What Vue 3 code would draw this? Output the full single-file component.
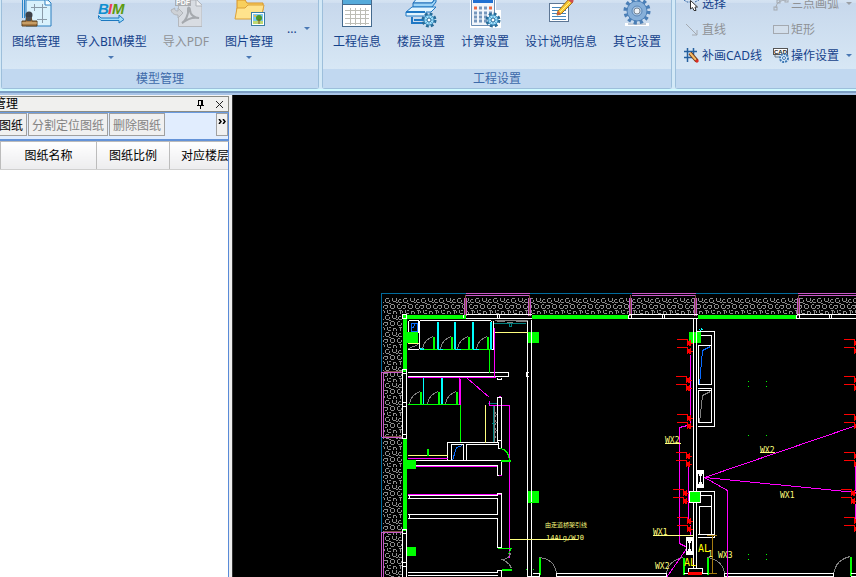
<template>
  <div class="app">
    <header class="ribbon">
      <section class="group group-model">
        <div class="group-body">
          <button v-for="item in modelTools" :key="item.label" class="tool" :disabled="item.disabled">
            <svg class="tool-icon" viewBox="0 0 32 28">
              <g v-if="item.icon === 'drawing'">
                <path d="M6 0V26H31V3L28 0Z" fill="#d9f1fc" stroke="#2a7fc0" />
                <path d="M2.500 0V18M4.500 0V18" stroke="#2a86c8" />
                <path d="M25 0V5H31" fill="#fff" stroke="#2a7fc0" />
                <path d="M11 7.500H27M14.500 4V11M22.500 4V23M17 19.500H27" stroke="#8a9aa8" fill="none" />
                <path d="M7 17H11L12 21H17V26H2V21H6Z" fill="#a97b45" stroke="#5d4220" />
                <path d="M2 23H17" stroke="#e5c084" />
                <circle cx="9" cy="15" r="3.500" fill="#3d4147" />
                <path d="M7 17H11V21H7Z" fill="#4b4d50" />
              </g>
              <g v-else-if="item.icon === 'bim'">
                <g class="bim-text">
                  <text x="3" y="14" fill="#0f8fd0">B</text>
                  <text x="13" y="14" fill="#ee3e58">I</text>
                  <text x="17" y="14" fill="#5d9b10">M</text>
                </g>
                <path d="M3.500 15.500L6 18H24V15L29 19.500L24 23V20.500H6L3.500 18Z" fill="#9fdcf8" stroke="#1b78bf" />
              </g>
              <g v-else-if="item.icon === 'pdf'">
                <path d="M8.500 0H27L32 5V26.500H8.500Z" fill="#d8dce2" stroke="#b4b8be" />
                <path d="M26 0V6H32" fill="#eceef1" stroke="#aeb2b8" />
                <rect x="5" y="0" width="16" height="6" fill="#a9adb2" />
                <text class="pdf-text" x="6" y="5">PDF</text>
                <path d="M12 23C15 22 19 14 18 9C18 7 20 7 20 10C20 15 25 18 29 18C24 17 17 19 12 23Z" fill="none" stroke="#a5a9ae" stroke-width="2" />
                <path d="M1 10C2 14 5 15 8 15V18L13 13L8 8V11C6 11 4 10 5 8Z" fill="#cdd1d6" stroke="#b0b4b9" />
              </g>
              <g v-else-if="item.icon === 'picture'">
                <path d="M4 18V0H12L14 3H30V10L23 18Z" fill="#f8cf5d" stroke="#d8942b" />
                <path d="M2 19L4 8H12L15 5H31L28 19Z" fill="#ffe38d" stroke="#dca13a" />
                <rect x="18.500" y="12.500" width="13" height="13" fill="#fff" stroke="#3b7da5" />
                <rect x="20" y="14" width="10" height="7" fill="#7cc7ef" />
                <rect x="20" y="21" width="10" height="3" fill="#bed972" />
                <circle cx="26" cy="18" r="3" fill="#4e9828" />
                <path d="M26 19V24" stroke="#855624" />
                <circle cx="22" cy="16" r="1" fill="#ffb426" />
              </g>
            </svg>
            <span class="tool-label">{{ item.label }}</span>
            <i v-if="item.menu" class="arrow"></i>
          </button>
          <button class="more" aria-label="更多"><span>...</span><i class="arrow"></i></button>
        </div>
        <div class="group-title">模型管理</div>
      </section>

      <section class="group group-project">
        <div class="group-body">
          <button v-for="item in projectTools" :key="item.label" class="tool">
            <svg class="tool-icon" viewBox="0 0 32 28">
              <g v-if="item.icon === 'table'" shape-rendering="crispEdges">
                <path d="M1 0H31V27H1Z" fill="#446a8e" />
                <rect x="2" y="5" width="28" height="21" fill="#fff" />
                <rect x="2" y="0" width="28" height="4" fill="#55aada" />
                <path d="M4 10H28M4 14H28M4 18H28M4 23H28M9 7V24M14 7V24M19 7V24M24 7V24" transform="translate(0 .5)" stroke="#bdbdb5" />
              </g>
              <g v-else-if="item.icon === 'floors'">
                <path d="M8 3L13 -3H31L27 3Z" fill="#d6effd" stroke="#1f6fb8" />
                <path d="M8 3H27L31 -2V2L27 7H8Z" fill="#9ad3f6" stroke="#1f6fb8" />
                <path d="M1 12L7 7H31L26 12H21V16H1Z" fill="#e1f4fe" stroke="#1f78c4" />
                <path d="M1 12H20M7 17V23H24V18M9 20H21" fill="none" stroke="#1f78c4" stroke-width="2" />
              </g>
              <g v-else-if="item.icon === 'calc'">
                <path d="M1 0H27V10H32V28H1Z" fill="#fff" />
                <path d="M2.500 0V25.500H25.500V0" fill="#f1f5fb" stroke="#6a8db5" />
                <rect x="4" y="0" width="20" height="3" fill="#1e6fd2" />
                <path d="M5 8H8M20 8H23" stroke="#ee6a43" stroke-width="3" />
                <path d="M10 8H18M5 13H23M5 17H23M5 21H18" stroke="#7797bd" stroke-width="3" stroke-dasharray="3 2" />
              </g>
              <g v-else-if="item.icon === 'note'">
                <rect x="4.500" y="3.500" width="19" height="18" fill="#fff" stroke="#5d7694" />
                <path d="M7 7.500H21M7 10.500H21M7 13.500H21M7 16.500H21M7 19.500H21" stroke="#4586bc" />
                <path d="M13 11L24 -1L28 2L16 14L12 15Z" fill="#f9c730" stroke="#9f7020" />
                <path d="M15 12L26 1" stroke="#fff08a" />
                <path d="M12 15L13 11L16 14Z" fill="#d95b3c" />
                <path d="M24 -1L28 2" stroke="#cf4d4d" stroke-width="3" />
              </g>
              <g v-else>
                <rect x="4" y="23" width="24" height="3" fill="#fff" />
                <path d="M7 24H25" stroke="#8498b0" />
                <circle cx="16" cy="11" r="11" fill="none" stroke="#4a7eb6" stroke-width="5" stroke-dasharray="3 2.760" />
                <circle cx="16" cy="11" r="10" fill="#86afd9" stroke="#4b7fb7" />
                <circle cx="16" cy="11" r="5" fill="#a9c8e8" stroke="#5b86b5" />
                <circle cx="16" cy="11" r="3" fill="#eef3f8" stroke="#7a8794" />
              </g>
              <g v-if="item.gear">
                <circle cx="24" cy="20" r="6" fill="none" stroke="#276b98" stroke-width="3" stroke-dasharray="2.700 2" />
                <circle cx="24" cy="20" r="5" fill="#a6e0fb" stroke="#2f83b4" />
                <path d="M24 16V24M20 20H28M21 17L27 23M27 17L21 23" stroke="#5bb0dc" />
                <circle cx="24" cy="20" r="2" fill="#fff" stroke="#276b98" />
              </g>
            </svg>
            <span class="tool-label">{{ item.label }}</span>
          </button>
        </div>
        <div class="group-title">工程设置</div>
      </section>

      <section class="group group-edit">
        <div class="group-body edit-grid">
          <button v-for="item in editTools" :key="item.label" class="small-tool" :disabled="item.disabled">
            <svg class="small-icon" viewBox="0 0 16 16">
              <g v-if="item.icon === 'select'">
                <path d="M0 5L3 7H6M11 7L15 5" fill="none" stroke="#2d62a3" stroke-dasharray="2 1" />
                <path d="M6.500 5.500V14L8.500 12.500L10 15.500H12L11 12H13.500Z" fill="#fff" stroke="#333" />
              </g>
              <g v-else-if="item.icon === 'arc'" fill="none" stroke="#a4a9b0">
                <path d="M3 13C3 8 7 5 14 5" />
                <rect x="1" y="12" width="3" height="3" />
                <rect x="4" y="5" width="3" height="3" />
                <rect x="12" y="4" width="3" height="3" />
              </g>
              <path v-else-if="item.icon === 'line'" d="M2 3L13 14M13 9V14H8" fill="none" stroke="#a4a9b0" />
              <rect v-else-if="item.icon === 'rect'" x=".5" y="4.500" width="15" height="8" fill="#d3dfec" stroke="#a4a9b0" />
              <g v-else-if="item.icon === 'cad'">
                <path d="M0 4.500H13M0 10.500H8M3.500 1V15M9.500 1V8" stroke="#245f9e" stroke-width="1.500" />
                <path d="M6 6L13 14" stroke="#6d3511" stroke-width="4" />
                <path d="M6 6L12 13" stroke="#f6bd67" stroke-width="2" />
                <path d="M12 13L14 15" stroke="#dc2c23" stroke-width="3" />
              </g>
              <g v-else>
                <rect x=".5" y="1.500" width="14" height="6" fill="#fff" stroke="#555" />
                <text class="cad-text" x="1" y="7">CAD</text>
                <circle cx="11" cy="11" r="4" fill="#d6eafa" stroke="#3d78b5" stroke-width="2" stroke-dasharray="2 1" />
                <circle cx="11" cy="11" r="1.500" fill="#fff" stroke="#3d78b5" />
                <path d="M2 8V10H6" fill="none" stroke="#6b747e" />
              </g>
            </svg>
            <span>{{ item.label }}</span>
            <i v-if="item.menu" class="arrow"></i>
          </button>
        </div>
        <div class="group-title"></div>
      </section>
    </header>

    <main class="workspace">
      <aside class="panel">
        <div class="panel-title">
          <span class="panel-name">图纸管理</span>
          <button class="title-btn" aria-label="固定">
            <svg viewBox="0 0 9 9" shape-rendering="crispEdges">
              <path d="M2 0H7V5H8V6H5V9H4V6H1V5H2ZM3 1V5H5V1Z" fill="#000" fill-rule="evenodd" />
            </svg>
          </button>
          <button class="title-btn" aria-label="关闭">
            <svg viewBox="0 0 9 9"><path d="M1 1L8 8M8 1L1 8" stroke="#222" /></svg>
          </button>
        </div>
        <div class="panel-tools">
          <button class="panel-btn first">添加图纸</button>
          <button class="panel-btn" disabled>分割定位图纸</button>
          <button class="panel-btn" disabled>删除图纸</button>
          <button class="panel-more" aria-label="展开">
            <svg viewBox="0 0 9 5"><path d="M1 0L3 2.500L1 5M5 0L7 2.500L5 5" fill="none" stroke="#000" stroke-width="1.500" /></svg>
          </button>
        </div>
        <div class="table-wrap">
          <table class="sheet-table">
            <thead>
              <tr><th class="col-name">图纸名称</th><th class="col-scale">图纸比例</th><th class="col-floor">对应楼层</th></tr>
            </thead>
          </table>
        </div>
      </aside>

      <div class="canvas">
        <svg class="plan" viewBox="232 95 624 482" preserveAspectRatio="xMinYMin slice">
          <defs>
            <pattern id="gravel" x="384" y="297" width="18" height="17" patternUnits="userSpaceOnUse">
              <path
                d="M2 1H4M1 2V4M5 3V4M2 5H4M8 1V3M9 4H11M12 1V3M15 2H16M14 3V4M15 5H17M0 8H2M3 8V10M1 11H2M7 7H9M6 8V10M10 8V10M7 11H9M13 8V10M14 7H15M14 11H16M17 9V10M3 13V15M4 16H6M5 13H6M9 14H11M9 15V16M12 15V16M15 13H17M16 14V16M0 14V15M5 6H6M12 5H13"
                transform="translate(.5 .5)" fill="none" stroke="#8c8c8c" stroke-linecap="square" shape-rendering="crispEdges"
              />
            </pattern>
          </defs>
          <path d="M383 297H856V314H402V577H383Z" fill="url(#gravel)" />

          <g class="lines">
            <!-- 外轮廓 -->
            <path class="blue" d="M381 371V293H465M529 293H631M695 293H797M381 436V531" />
            <path class="orchid" d="M465 293H529M465 295H529M631 293H695M631 295H695M797 293H856M797 295H856M381 371V436M383 371V436M381 531V577M383 531V577" />
            <path class="orchid" d="M464 297V315M466 297V315M528 297V315M530 297V315M629 297V315M631 297V315M694 297V315M696 297V315M797 297V315M799 297V315M381 372H402M381 437H402M381 532H402" />
            <path class="brown" d="M465 294V315M529 294V315M630 294V315M695 294V315M798 294V315M383 371H402M383 436H402M383 531H402" />

            <!-- 外墙 -->
            <path class="wall-green" d="M404 371V316H465M531 316H628M697 316H796M404 437V530" />
            <path class="white" d="M465 314H531M628 314H697M796 314H856M406 371V437M406 530V577M465 318H531M628 318H697M796 318H856M402 371V437M402 530V577M463 314V318M497 314V318M499 314V318M628 314V318M631 314V318M662 314V318M664 314V318M796 314V318M799 314V318M829 314V318M831 314V318" />
            <path class="green" d="M407 318H464M532 318H627M698 318H795M406 319V369M406 438V529" />
            <path class="white" d="M402 369H406V373H402ZM402 402H406V406H402ZM402 434H406V438H402ZM402 529H406V533H402ZM402 562H406V566H402ZM402 314H406V318H402Z" />
            <path class="white" d="M527 319V577M531 319V577M693 318V568M696 318V568" />

            <!-- 卫生间隔间 -->
            <path class="white" d="M408 320H418V332M408 320V332M419 320V348M419 320H490M491 320V349H493V320M407 349H418M407 372H508V376H497M497 377V379H501V377M407 376H497M497 372H508M528 372H526V376H528" />
            <path class="azure" d="M411 331V323H417V331H411M415 323L412 328" />
            <path class="yellow" d="M407 343H418M493 332H527" />
            <path class="cyan wide" d="M419 348H423M437 321V349M454 321V349M472 321V349M490 321V349M441 377V404" />
            <path class="cyan" d="M423 377V404M437 349H442M454 349H460M472 349H478" />
            <path class="green" d="M423 349H437M442 349H454M460 349H472M478 349H490M407 404H460M460 404V442M489 349V372" />
            <path class="green wide" d="M433 336V349M451 336V349M468 336V349M487 336V349M420 391V404M438 391V404M456 391V404" />
            <path class="gray" d="M422 349Q423 339 433 336M440 349Q441 339 451 336M457 349Q458 339 468 336M476 349Q477 339 487 336M409 404Q410 394 420 391M427 404Q428 394 438 391M445 404Q446 394 456 391M408 348L418 344" />
            <path class="gray" d="M494 320H527M496 321H504M506 322H512M515 321H526M494 405V442M493 410L496 414L493 418L496 422L493 426L496 430L493 434L496 438" />
            <path class="teal" d="M493 323H525M509 323V326H511V323M487 403H497M493 405V442M491 423H494" />
            <path class="magenta" d="M407 377H495M459 377V404M494 327V376M467 378L489 397M489 400V405H509V557M460 378V404M498 396H500" />
            <path class="white" d="M497 442V397H501V448H498V441M497 440H501M447 460V442H497M451 460V444H463V460M466 460V444H497M407 460H501V475H497V465H407M407 462H409" />
            <path class="yellow" d="M485 404V442M407 455H447M509 539H577" />
            <path class="magenta" d="M407 458H447M407 466H496M407 494H500M498 475H501" />
            <path class="azure" d="M452 460L456 447L462 445" />
            <path class="green wide" d="M427 448V455M500 460H510M501 569H511" />
            <path class="green" d="M500 448Q508 449 509 460M497 548H511M510 549L508 554" />
            <path class="gray" d="M501 559Q508 559 510 553M501 559Q509 562 511 568" />
            <path class="white" d="M407 495H497V493H501V547H497V518H407M407 498H497V514H407M409 495V498M409 514V518M407 572H497V570H501V577M407 575H497" />

            <!-- 右侧竖井 -->
            <path class="white" d="M696 331H714V426H697M698 335H711V384H698V345H711M697 388H711V422H698V390H711M696 491H714V537H697M711 534V495H697M699 534V506H711M697 534H714" />
            <path class="azure" d="M699 384L702 350L710 346" />
            <path class="gray" d="M699 422L702 395L710 391M539 557Q555 559 556 574M666 574Q667 560 683 557M707 557Q723 560 724 574M833 574Q835 559 850 556" />
            <path class="cyan" d="M699 329L701 331M701 328L702 330" />
            <path class="green wide" d="M539 557V574M683 557V574M707 557V574M850 556V575" />
            <path class="green" d="M747 381h1M765 381h1M747 386h1M765 386h1M747 435h1M765 435h1M747 554h1M765 554h1M747 559h1M765 559h1M525 569h1M532 569h1" />
            <path class="white" d="M527 577V576H539V573H532M556 573H666V576H556ZM724 573H833V576H724ZM850 573H856M850 576H856M688 573V568H702V573H707M683 573H688" />

            <!-- 管线 -->
            <path class="magenta" d="M690 354V423M688 464V520M690 524V535M679 430V543L687 547L666 577M679 427L687 425M679 430V427M704 477L856 425M704 477L856 492M704 477L727 490V577M855 464V490M855 503V520" />
            <path class="ochre" d="M712 535V573M706 535H716M708 573H716" />
            <path class="yellow" d="M664 443H680M759 452H774M652 535H692" />
          </g>

          <g fill="#00ff00">
            <rect v-for="(c, i) in columns" :key="i" :x="c[0]" :y="c[1]" :width="c[2]" :height="c[3]" />
          </g>
          <path class="crisp" d="M693.500 332V343M696.500 332V343M531.500 332V343M531.500 491V502" stroke="#fff" />
          <rect class="crisp" x="689.500" y="491.500" width="11" height="11" fill="none" stroke="#fff" />

          <g v-for="(f, i) in fixtures" :key="'f' + i" class="crisp" :transform="`translate(${f[0]} ${f[1]})`">
            <path d="M0 .5H10M0 8.500H10" stroke="#ff0000" />
            <path d="M10 0H11V2H13V1H14V4H16V5H14V7H12V6H11V7H10ZM10 8H11V10H13V9H14V12H16V13H14V15H12V14H11V15H10Z" fill="#ff0000" />
          </g>
          <rect class="crisp" x="688" y="572" width="14" height="3" fill="#ff0000" />

          <g v-for="(b, i) in boxes" :key="'b' + i" class="crisp" :transform="`translate(${b[0]} ${b[1]})`">
            <rect width="7" height="18" fill="#fff" />
            <path d="M1 4H2V6H3V12H2V14H1ZM6 4H5V6H4V12H5V14H6Z" fill="#000" />
          </g>

          <text v-for="(t, i) in notes" :key="'t' + i" :class="t.kind" :x="t.x" :y="t.y">{{ t.text }}</text>
        </svg>
      </div>
    </main>
  </div>
</template>

<script setup>
// 功能区按钮
const modelTools = [
  { icon: 'drawing', label: '图纸管理' },
  { icon: 'bim', label: '导入BIM模型', menu: true },
  { icon: 'pdf', label: '导入PDF', disabled: true },
  { icon: 'picture', label: '图片管理', menu: true }
];

const projectTools = [
  { icon: 'table', label: '工程信息' },
  { icon: 'floors', label: '楼层设置', gear: true },
  { icon: 'calc', label: '计算设置', gear: true },
  { icon: 'note', label: '设计说明信息' },
  { icon: 'gear', label: '其它设置' }
];

const editTools = [
  { icon: 'select', label: '选择' },
  { icon: 'arc', label: '三点画弧', disabled: true, menu: true },
  { icon: 'line', label: '直线', disabled: true },
  { icon: 'rect', label: '矩形', disabled: true },
  { icon: 'cad', label: '补画CAD线' },
  { icon: 'options', label: '操作设置', menu: true }
];

// 柱子 [x, y, 宽, 高]
const columns = [
  [407, 332, 11, 11], [528, 332, 11, 11], [689, 332, 12, 11],
  [407, 460, 9, 9], [528, 491, 11, 12], [689, 491, 12, 12], [407, 547, 9, 9]
];

// 插座
const fixtures = [
  [677, 339], [676, 376], [677, 414], [676, 452], [673, 489], [677, 517],
  [844, 339], [844, 376], [844, 414], [844, 452], [841, 489], [844, 517]
];

// 配电箱
const boxes = [[697, 470], [686, 537]];

const notes = [
  { text: 'WX2', x: 665, y: 443, kind: 'note' },
  { text: 'WX2', x: 760, y: 453, kind: 'note' },
  { text: 'WX1', x: 780, y: 498, kind: 'note' },
  { text: 'WX1', x: 653, y: 535, kind: 'note' },
  { text: 'WX3', x: 718, y: 558, kind: 'note' },
  { text: 'WX2', x: 655, y: 569, kind: 'note' },
  { text: 'AL', x: 698, y: 552, kind: 'note box' },
  { text: 'AL', x: 684, y: 566, kind: 'note box' },
  { text: '1', x: 708, y: 557, kind: 'note' },
  { text: '由走道桥架引线', x: 545, y: 527, kind: 'note cn' },
  { text: '14ALg/WJ0', x: 546, y: 540, kind: 'note wire' }
];
</script>

<style>
body { margin: 0; background: #000; }
</style>

<style scoped>
.app { display: flex; flex-direction: column; height: 100vh; overflow: hidden; font-family: "Noto Sans", "Noto Sans CJK SC", sans-serif; font-size: 12px; color: #000; }
button { font: inherit; color: inherit; background: none; border: none; padding: 0; margin: 0; white-space: nowrap; }

.ribbon { display: flex; gap: 3px; flex: none; padding: 0 0 2px 1px; background: #d3e9f7; border-bottom: 2px solid #7c9ec4; box-shadow: inset 0 -2px #d0fbff; overflow: hidden; }
.group { box-sizing: border-box; flex: none; border: 1px solid #9dbfdb; border-top: none; border-radius: 0 0 3px 3px; box-shadow: inset 1px 0 #e8f2fb, inset -1px 0 #e8f2fb; }
.group-model { width: 318px; }
.group-project { width: 350px; }
.group-edit { flex: 1; min-width: 0; border-right: none; border-bottom-right-radius: 0; }
.group-body { display: flex; align-items: flex-start; gap: 16px; box-sizing: border-box; height: 69px; padding: 0 10px; background: linear-gradient(#d5e3f2 0, #d0dff0 3px, #c7d8ec 3px, #d7e7f5 100%); }
.group-title { height: 19px; line-height: 19px; text-align: center; color: #3e6aaa; background: #c1d8f0; }
.tool { display: flex; flex-direction: column; align-items: center; color: #15428b; }
.tool:disabled, .small-tool:disabled { color: #8f9296; }
.tool-icon { width: 32px; height: 28px; display: block; }
.tool-label { height: 28px; line-height: 28px; }
.arrow { width: 0; height: 0; border: 3px solid transparent; border-top-color: #4a78b4; border-bottom: none; }
.bim-text { font: italic bold 15px "Liberation Sans", sans-serif; }
.pdf-text { font: bold 7px "Liberation Sans", sans-serif; fill: #fff; }
.cad-text { font: bold 6px "Liberation Sans", sans-serif; fill: #222; }
.more { display: flex; align-items: center; gap: 7px; height: 56px; margin-left: -2px; color: #15428b; }

.edit-grid { display: grid; grid-template-columns: 89px 1fr; grid-template-rows: 26px 26px 26px; gap: 0; padding: 0 0 1px 8px; align-items: stretch; align-content: end; overflow: hidden; }
.small-tool { display: flex; align-items: center; gap: 2px; color: #15428b; }
.small-icon { width: 16px; height: 16px; flex: none; }
.small-tool .arrow { margin-left: 5px; }
.small-tool:disabled .arrow { border-top-color: #9ba0a6; }

.workspace { flex: 1; min-height: 0; display: flex; background: #000; border-top: 2px solid #a9c5e8; }
.panel { flex: none; display: flex; flex-direction: column; box-sizing: border-box; width: 232px; padding-right: 3px; background: #eeeeee; border-top: 1px solid #f4f4f4; }
.panel-title { display: flex; align-items: center; gap: 10px; height: 14px; padding-right: 4px; border: 1px solid #8a8c86; border-left: none; background: #f0f0ee; }
.panel-name { flex: 1; margin-left: -30px; line-height: 14px; }
.title-btn svg { display: block; width: 9px; height: 9px; }
.panel-tools { display: flex; align-items: flex-start; height: 26px; border-top: 1px solid #6a9be0; border-right: 1px solid #5a8bd8; border-bottom: 2px solid #6493d8; background: #e1edfe; }
.panel-btn { box-sizing: border-box; height: 23px; padding: 0 3px; margin-right: 1px; color: #000; background: #f0f0f0; border: 1px solid #a0a0a0; }
.panel-btn:disabled { color: #838383; }
.first { margin-left: -29px; }
.panel-more { box-sizing: border-box; width: 12px; height: 23px; margin-left: auto; padding-top: 5px; display: flex; justify-content: center; align-items: flex-start; background: #f0f0f0; border: 1px solid #a0a0a0; }
.panel-more svg { width: 9px; height: 5px; }
.table-wrap { flex: 1; overflow: hidden; background: #fff; border-right: 1px solid #5a8bd8; border-top: 1px solid #bbb; }
.sheet-table { table-layout: fixed; width: 240px; border-collapse: collapse; }
.sheet-table th { box-sizing: border-box; height: 27px; padding: 0; font-weight: normal; background: linear-gradient(#fff, #ececee); border-bottom: 1px solid #cfcfcf; border-left: 1px solid #bcbcbc; }
.col-name { width: 96px; }
.col-scale { width: 73px; }

.canvas { flex: 1; min-width: 0; overflow: hidden; background: #000; box-shadow: inset 1px 0 #333; }
.plan { display: block; width: 100%; height: 100%; }
.crisp { shape-rendering: crispEdges; }
.lines { transform: translate(0.5px, 0.5px); fill: none; stroke-width: 1; shape-rendering: crispEdges; }
.white { stroke: #fff; }
.green { stroke: #00ff00; }
.wall-green { stroke: #00ff00; stroke-width: 4; }
.cyan { stroke: #00ffff; }
.teal { stroke: #008080; }
.blue { stroke: #006a9c; }
.azure { stroke: #0a6cff; }
.orchid { stroke: #c858c8; }
.brown { stroke: #7a5040; }
.ochre { stroke: #a57c10; }
.gray { stroke: #808080; }
.yellow { stroke: #ffff7f; }
.magenta { stroke: #ff00ff; }
.wide { stroke-width: 2; }
.note { font: 8px "DejaVu Sans Mono", monospace; fill: #ffff7f; }
.box { font-size: 10px; fill: #ffff00; }
.wire { font-size: 7px; }
.cn { font: 6px "Noto Sans CJK SC", sans-serif; }
</style>
